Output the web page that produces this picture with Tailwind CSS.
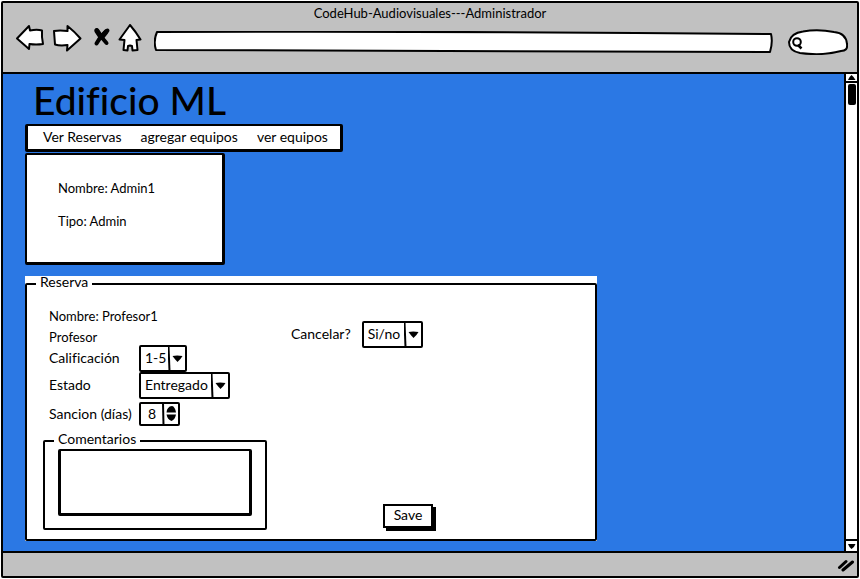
<!DOCTYPE html>
<html lang="es">
<head>
<meta charset="utf-8">
<meta name="viewport" content="width=device-width, initial-scale=1">
<title>CodeHub-Audiovisuales---Administrador</title>
<script src="https://cdn.jsdelivr.net/npm/@tailwindcss/browser@4"></script>
</head>
<body class="bg-white font-['Lato','Open_Sans',sans-serif] text-[14px] leading-4 text-black [font-variant-ligatures:none]">
<div class="flex min-h-screen flex-col p-px">
  <div class="flex flex-1 flex-col overflow-hidden rounded-xs border-2 border-black bg-[#c1c1c1]">
    <header class="flex h-[71px] flex-col border-b-2 border-black">
      <div class="h-[18px] pt-0.5 text-center text-[13px]">CodeHub-Audiovisuales---Administrador</div>
      <div class="flex items-center pr-[9px] pl-3">
        <button type="button" aria-label="Atrás" class="h-7 w-[30px]"><svg class="block" width="30" height="28" viewBox="15 23 30 28" fill="white" stroke="black" stroke-width="2" stroke-linejoin="round"><path d="M17 37.5 29 25 30 29.500Q37 28 42 29.500Q41.500 36 43 43Q36 44 29.500 43L29 48Z"/></svg></button>
        <button type="button" aria-label="Adelante" class="ml-[7px] h-7 w-[30px]"><svg class="block" width="30" height="28" viewBox="52 23 30 28" fill="white" stroke="black" stroke-width="2" stroke-linejoin="round"><path d="M54 30Q60 29 67.500 30L67.500 25Q75 31 80.500 37.500L67 49.500 67.500 44Q60 45 55 43.500Q54.500 37 54 30Z"/></svg></button>
        <button type="button" aria-label="Detener" class="ml-2.5 h-7 w-5"><svg class="block" width="20" height="28" viewBox="92 23 20 28" stroke="black" fill="none" stroke-linecap="round"><path stroke-width="4" d="M96.500 29Q100 35 106.500 42M107.500 29.500Q102 33 96.500 42.500"/><path stroke-width="5" d="M97 30 101 36M106 31 102 36"/></svg></button>
        <button type="button" aria-label="Inicio" class="ml-1.5 h-7 w-6"><svg class="block" width="24" height="28" viewBox="118 23 24 28" fill="white" stroke="black" stroke-width="2" stroke-linejoin="round"><path d="M130 24Q136 31 140.500 38.500L136.500 39 137.500 49 132.500 49.500 132 45 130 44.500 128 45 127.500 49.500 123.500 49 124.500 39 119.500 38.500Q125 31 130 24Z"/></svg></button>
        <div class="relative mt-2 ml-3 h-[22px] flex-1">
          <svg class="absolute inset-0 h-full w-full" viewBox="0 0 620 22" preserveAspectRatio="none" fill="white" stroke="black" stroke-width="2"><path vector-effect="non-scaling-stroke" stroke-linejoin="round" d="M3 1Q310 0 617 3Q619 11 616 21Q310 20 2 19Q-1 10 3 1Z"/></svg>
          <input type="text" aria-label="Dirección" class="relative h-full w-full bg-transparent px-2 outline-none">
        </div>
        <div class="relative mt-2 ml-3.5 h-[26px] w-[60px]">
          <svg class="absolute inset-0" width="60" height="26" viewBox="0 0 60 26" fill="white" stroke="black" stroke-width="2"><path d="M15 2.500Q30 0 46 3Q58 4 59 15Q60 22 53 22Q35 27 12 24Q1 22 1 13Q3 4 15 2.500Z"/><circle cx="9" cy="13" r="3.800"/><path d="M10 16 13.500 19.500" stroke-width="2.500"/></svg>
          <input type="search" aria-label="Buscar" class="relative h-full w-full bg-transparent pr-2 pl-5 outline-none">
        </div>
      </div>
    </header>

    <div class="flex flex-1 bg-[#2b78e4]">
      <main class="flex-1 px-[22px] pb-2.5">
        <h1 class="pt-0.5 pl-2 text-[39px] leading-[48px] font-medium">Edificio ML</h1>
        <nav class="flex h-7 w-[318px] items-center gap-[19px] rounded-xs border-[3px] border-t-2 border-black bg-white px-[15px] pb-0.5 whitespace-nowrap">
          <a href="#reservas">Ver Reservas</a>
          <a href="#agregar">agregar equipos</a>
          <a href="#equipos">ver equipos</a>
        </nav>
        <section class="mt-px flex h-[112px] w-[200px] flex-col gap-[17px] rounded-xs border-[3px] border-t-2 border-l-2 border-black bg-white px-[31px] pt-[25px] text-[13px]">
          <p>Nombre: Admin1</p>
          <p>Tipo: Admin</p>
        </section>

        <form class="mt-[11px] w-[572px] bg-white">
          <fieldset class="rounded-xs border-2 border-black pb-[9px] pl-4">
            <legend class="ml-[-7px] px-1 pb-1 leading-3">Reserva</legend>
            <div class="flex gap-[61px] pt-4 pl-1.5">
              <div>
                <p class="h-[21px] text-[13px]">Nombre: Profesor1</p>
                <p class="h-4 text-[13px]">Profesor</p>
                <div class="grid grid-cols-[90px_auto] items-center justify-items-start">
                  <label for="calificacion" class="pb-0.5">Calificación</label>
                  <div class="relative h-[27px] w-12">
                    <select id="calificacion" class="h-full w-full appearance-none rounded-xs border-2 border-black bg-white pb-0.5 pl-1"><option>1-5</option></select>
                    <svg class="pointer-events-none absolute top-0 right-0" width="19" height="27" viewBox="0 0 19 27"><path d="M.500 1 1.500 26" stroke="black" stroke-width="2"/><path d="M4.500 11Q9 10 14.500 11Q12.500 14.500 9.500 17Q7 14.500 4.500 11Z"/></svg>
                  </div>
                  <label for="estado" class="pb-0.5">Estado</label>
                  <div class="relative h-[27px] w-[91px]">
                    <select id="estado" class="h-full w-full appearance-none rounded-xs border-2 border-black bg-white pb-0.5 pl-1"><option>Entregado</option></select>
                    <svg class="pointer-events-none absolute top-0 right-0" width="19" height="27" viewBox="0 0 19 27"><path d="M.500 1 1.500 26" stroke="black" stroke-width="2"/><path d="M4.500 11Q9 10 14.500 11Q12.500 14.500 9.500 17Q7 14.500 4.500 11Z"/></svg>
                  </div>
                  <label for="sancion" class="mt-[3px] whitespace-nowrap">Sancion (días)</label>
                  <div class="relative mt-[3px] h-6 w-[41px]">
                    <input id="sancion" type="number" value="8" class="h-full w-full rounded-xs border-2 border-black bg-white pb-0.5 pl-[7px] [appearance:textfield]">
                    <svg class="pointer-events-none absolute top-0 right-0" width="18" height="24" viewBox="0 0 18 24"><path d="M1 1 1.500 23" stroke="black" stroke-width="2"/><path d="M4.500 10.500Q5 4.500 10 4Q13 4.500 14 10.500ZM4.500 12.500 14 12.500Q13 17.500 9.500 19Q5.500 17.500 4.500 12.500Z"/></svg>
                  </div>
                </div>
              </div>
              <div class="mt-[13px] flex h-[27px] items-center gap-[11px] self-start">
                <label for="cancelar" class="pb-0.5">Cancelar?</label>
                <div class="relative h-[27px] w-[61px]">
                  <select id="cancelar" class="h-full w-full appearance-none rounded-xs border-2 border-black bg-white pb-0.5 pl-1"><option>Si/no</option></select>
                  <svg class="pointer-events-none absolute top-0 right-0" width="19" height="27" viewBox="0 0 19 27"><path d="M.500 1 1.500 26" stroke="black" stroke-width="2"/><path d="M4.500 11Q9 10 14.500 11Q12.500 14.500 9.500 17Q7 14.500 4.500 11Z"/></svg>
                </div>
              </div>
            </div>
            <div class="mt-[7px] flex items-end gap-[116px]">
              <fieldset class="w-[224px] rounded-xs border-2 border-black px-[13px] pb-3">
                <legend class="ml-[-4px] px-1 pb-1 leading-3"><label for="comentarios">Comentarios</label></legend>
                <textarea id="comentarios" class="block h-[67px] w-full resize-none rounded-xs border-[3px] border-t-2 border-black bg-white px-1 outline-none"></textarea>
              </fieldset>
              <button type="submit" class="mb-0.5 h-6 w-[50px] border-2 border-black bg-white pb-0.5 shadow-[3px_3px_0_#000]">Save</button>
            </div>
          </fieldset>
        </form>
      </main>

      <div class="flex w-[13px] flex-col items-center border-l-2 border-black bg-white" aria-hidden="true">
        <div class="flex h-[9px] w-full justify-center border-b-2 border-black"><svg width="9" height="7" viewBox="0 0 9 7"><path d="M1 6Q2 3 4.500 1Q7 3 8.500 6Z"/></svg></div>
        <div class="mt-px h-[21px] w-2 rounded-xs bg-black"></div>
        <div class="mt-auto flex h-3 w-full items-center justify-center border-t-2 border-black"><svg width="9" height="7" viewBox="0 0 9 7"><path d="M1 1 8.500 1Q7 5 4.500 6Q2 4 1 1Z"/></svg></div>
      </div>
    </div>

    <footer class="flex h-[25px] items-center justify-end border-t-2 border-black pr-0.5">
      <svg width="18" height="14" viewBox="0 0 18 14" stroke="black" stroke-width="3" stroke-linecap="round"><path d="M2.500 9.500 9 3.500M6 12 15.500 4"/></svg>
    </footer>
  </div>
</div>
</body>
</html>
